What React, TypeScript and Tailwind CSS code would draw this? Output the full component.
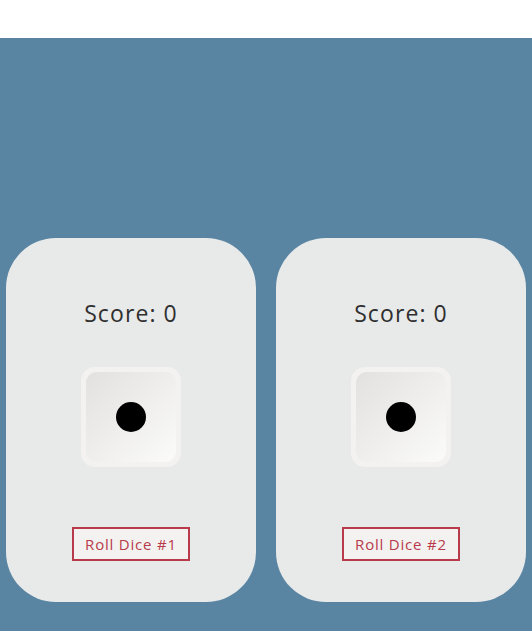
import React from "react";

const font = { fontFamily: '"Open Sans", "Liberation Sans", sans-serif' };

function Dice() {
  return (
    <div className="h-[100px] w-[100px] rounded-[14px] bg-[#f3f2f0] p-[5px]">
      <div className="flex h-full w-full items-center justify-center rounded-[11px] bg-gradient-to-br from-[#e2e1df] to-[#fbfbf9]">
        <div className="h-[30px] w-[30px] rounded-full bg-black" />
      </div>
    </div>
  );
}

function PlayerCard({ n }: { n: number }) {
  return (
    <div className="flex h-[364px] w-[250px] flex-col items-center rounded-[50px] bg-[#e8e9e9] pt-[59px]">
      <div className="h-[32px] text-[23px] leading-[32px] tracking-[1.1px] text-[#2f2f2f]">Score: 0</div>
      <div className="mt-[38px]">
        <Dice />
      </div>
      <button className="mt-[60px] h-[34px] w-[118px] border-2 border-[#b83a4b] bg-[#f3f2f0] text-[15px] tracking-[0.8px] text-[#b83a4b]">
        Roll Dice #{n}
      </button>
    </div>
  );
}

export default function App() {
  return (
    <div className="flex min-h-screen flex-col" style={font}>
      <div className="h-[38px] bg-white" />
      <div className="flex flex-1 justify-center gap-5 bg-[#5985a3] pt-[200px]">
        <PlayerCard n={1} />
        <PlayerCard n={2} />
      </div>
    </div>
  );
}
